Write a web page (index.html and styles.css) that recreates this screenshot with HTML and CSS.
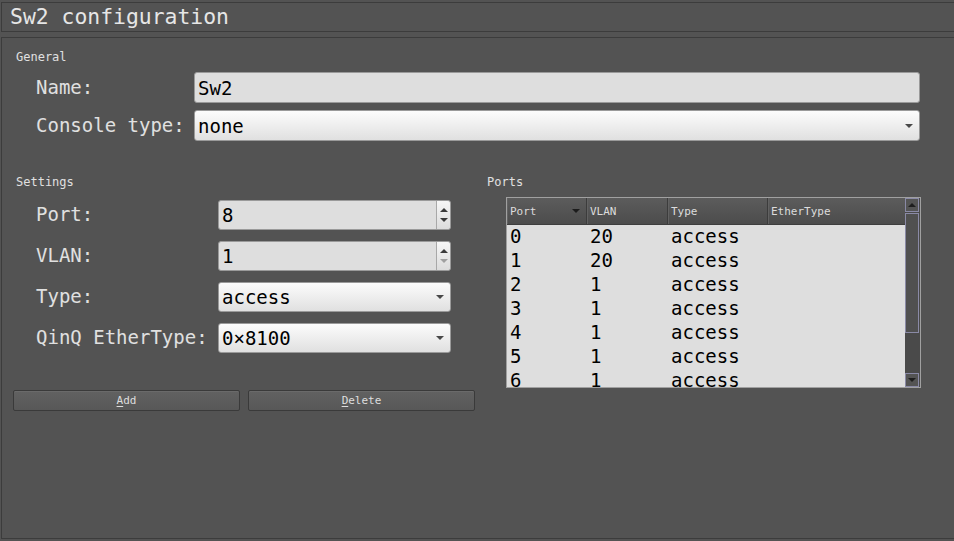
FILE: index.html
```html
<!DOCTYPE html>
<html>
<head>
<meta charset="utf-8">
<link rel="stylesheet" href="styles.css">
</head>
<body>
<div class="title">Sw2 configuration</div>
<div class="frame">
  <div class="group-label general-label">General</div>
  <div class="form general-form">
    <div class="lbl">Name:</div>
    <div class="field line-edit">Sw2</div>
    <div class="lbl">Console type:</div>
    <div class="field combo">none<span class="drop"></span></div>
  </div>
  <div class="lower">
    <div class="left-col">
      <div class="group-label">Settings</div>
      <div class="form settings-form">
        <div class="lbl">Port:</div>
        <div class="field spin"><span class="spin-val">8</span><span class="spin-btns"><span class="up"></span><span class="down"></span></span></div>
        <div class="lbl">VLAN:</div>
        <div class="field spin"><span class="spin-val">1</span><span class="spin-btns"><span class="up"></span><span class="down disabled"></span></span></div>
        <div class="lbl">Type:</div>
        <div class="field combo">access<span class="drop"></span></div>
        <div class="lbl">QinQ EtherType:</div>
        <div class="field combo">0×8100<span class="drop"></span></div>
      </div>
      <div class="buttons">
        <div class="btn"><u>A</u>dd</div>
        <div class="btn"><u>D</u>elete</div>
      </div>
    </div>
    <div class="right-col">
      <div class="group-label ports-label">Ports</div>
      <div class="table">
        <div class="table-main">
          <div class="thead">
            <div class="th c1">Port<span class="sort"></span></div>
            <div class="th c2">VLAN</div>
            <div class="th c3">Type</div>
            <div class="th c4">EtherType</div>
          </div>
          <div class="tbody">
            <div class="tr"><div class="td c1">0</div><div class="td c2">20</div><div class="td c3">access</div><div class="td c4"></div></div>
            <div class="tr"><div class="td c1">1</div><div class="td c2">20</div><div class="td c3">access</div><div class="td c4"></div></div>
            <div class="tr"><div class="td c1">2</div><div class="td c2">1</div><div class="td c3">access</div><div class="td c4"></div></div>
            <div class="tr"><div class="td c1">3</div><div class="td c2">1</div><div class="td c3">access</div><div class="td c4"></div></div>
            <div class="tr"><div class="td c1">4</div><div class="td c2">1</div><div class="td c3">access</div><div class="td c4"></div></div>
            <div class="tr"><div class="td c1">5</div><div class="td c2">1</div><div class="td c3">access</div><div class="td c4"></div></div>
            <div class="tr"><div class="td c1">6</div><div class="td c2">1</div><div class="td c3">access</div><div class="td c4"></div></div>
            <div class="tr"><div class="td c1">7</div><div class="td c2">1</div><div class="td c3">access</div><div class="td c4"></div></div>
          </div>
        </div>
        <div class="vscroll">
          <div class="sb-btn sb-up"><span></span></div>
          <div class="sb-handle"></div>
          <div class="sb-track"></div>
          <div class="sb-btn sb-down"><span></span></div>
        </div>
      </div>
    </div>
  </div>
</div>
</body>
</html>
```
FILE: styles.css
```css
* { box-sizing: border-box; }
html, body { margin: 0; padding: 0; }
body {
  width: 954px;
  height: 541px;
  overflow: hidden;
  background: #535353;
  font-family: "DejaVu Sans Mono", "Liberation Mono", monospace;
  color: #e2e2e2;
}
.title {
  margin: 2px 0 0 1px;
  height: 30px;
  border-top: 1px solid #3c3c3c;
  border-bottom: 1px solid #3c3c3c;
  border-left: 1px solid #3c3c3c;
  padding-left: 8px;
  font-size: 21.4px;
  line-height: 28px;
  color: #e6e6e6;
}
.frame {
  margin: 5px 0 0 1px;
  height: 502px;
  border: 1px solid #3c3c3c;
  border-right: none;
  padding-top: 12px;
}
.group-label {
  font-size: 12px;
  line-height: 14px;
  padding-left: 14px;
  color: #e0e0e0;
}
.form {
  display: grid;
  padding-left: 34px;
  align-items: center;
}
.general-form {
  margin-top: 8px;
  grid-template-columns: 158px 726px;
  grid-auto-rows: 31px;
  row-gap: 7px;
}
.settings-form {
  margin-top: 11px;
  grid-template-columns: 182px 233px;
  grid-auto-rows: 30px;
  row-gap: 11px;
}
.lbl {
  font-size: 19px;
  line-height: 22px;
  padding-bottom: 2px;
  color: #e0e0e0;
  white-space: nowrap;
}
.field {
  position: relative;
  height: 100%;
  border: 1px solid #9a9a9a;
  border-radius: 3px;
  font-size: 19px;
  color: #000;
  padding-left: 3px;
  display: flex;
  align-items: center;
}
.line-edit { background: #dedede; }
.combo { background: linear-gradient(#fcfcfc, #e0e0e0); }
.drop {
  position: absolute;
  right: 6px;
  top: 50%;
  margin-top: -2px;
  width: 0; height: 0;
  border-left: 4px solid transparent;
  border-right: 4px solid transparent;
  border-top: 4px solid #484848;
}
.spin { background: #dedede; padding-right: 0; }
.spin-val { flex: 1; }
.spin-btns {
  width: 14px;
  height: 100%;
  border-left: 1px solid #a8a8a8;
  background: linear-gradient(#f6f6f6, #dcdcdc);
  border-radius: 0 3px 3px 0;
  display: flex;
  flex-direction: column;
  align-items: center;
  justify-content: center;
  gap: 6px;
}
.spin-btns .up {
  width: 0; height: 0;
  border-left: 4px solid transparent;
  border-right: 4px solid transparent;
  border-bottom: 4px solid #3a3a3a;
}
.spin-btns .down {
  width: 0; height: 0;
  border-left: 4px solid transparent;
  border-right: 4px solid transparent;
  border-top: 4px solid #3a3a3a;
}
.spin-btns .down.disabled { border-top-color: #a0a0a0; }
.lower {
  display: flex;
  margin-top: 34px;
}
.left-col { width: 485px; }
.buttons {
  display: flex;
  gap: 8px;
  margin: 37px 0 0 11px;
}
.btn {
  width: 227px;
  height: 21px;
  border: 1px solid #3a3a3a;
  border-radius: 2px;
  background: linear-gradient(#616161, #585858);
  box-shadow: inset 0 1px 0 #6a6a6a;
  font-size: 11px;
  line-height: 19px;
  text-align: center;
  color: #dedede;
}
.btn u { text-decoration-thickness: 1px; text-underline-offset: 2px; }
.right-col { flex: 1; }
.ports-label { padding-left: 0; }
.table {
  margin: 8px 0 0 19px;
  width: 415px;
  height: 191px;
  border: 1px solid #a0a0a0;
  display: flex;
  background: #dedede;
}
.table-main {
  flex: 1;
  overflow: hidden;
}
.thead {
  display: flex;
  height: 27px;
  background: linear-gradient(#5c5c5c, #4c4c4c);
  border-bottom: 1px solid #3e3e3e;
}
.th {
  position: relative;
  font-size: 11px;
  color: #dcdcdc;
  padding-left: 2px;
  display: flex;
  align-items: center;
  border-right: 1px solid #3c3c3c;
  border-left: 1px solid #626262;
}
.c1 { width: 80px; }
.c2 { width: 81px; }
.c3 { width: 100px; }
.c4 { flex: 1; }
.th.c4 { border-right: none; }
.sort {
  position: absolute;
  right: 6px;
  top: 11px;
  width: 0; height: 0;
  border-left: 4px solid transparent;
  border-right: 4px solid transparent;
  border-top: 4px solid #1c1c1c;
}
.tr {
  display: flex;
  height: 24px;
}
.td {
  font-size: 19px;
  line-height: 22px;
  color: #000;
  padding-left: 3px;
  white-space: nowrap;
}
.vscroll {
  width: 15px;
  background: #4a4a4a;
  display: flex;
  flex-direction: column;
  padding: 0 1px 0 0;
}
.sb-btn {
  height: 14px;
  border: 1px solid #8a8aa6;
  background: #545454;
  display: flex;
  align-items: center;
  justify-content: center;
}
.sb-up span {
  width: 0; height: 0;
  border-left: 4px solid transparent;
  border-right: 4px solid transparent;
  border-bottom: 4px solid #1e1e1e;
}
.sb-down span {
  width: 0; height: 0;
  border-left: 4px solid transparent;
  border-right: 4px solid transparent;
  border-top: 4px solid #1e1e1e;
}
.sb-handle {
  margin-top: 1px;
  height: 120px;
  border: 1px solid #8a8aa6;
  background: #505050;
}
.sb-track { flex: 1; }
```
